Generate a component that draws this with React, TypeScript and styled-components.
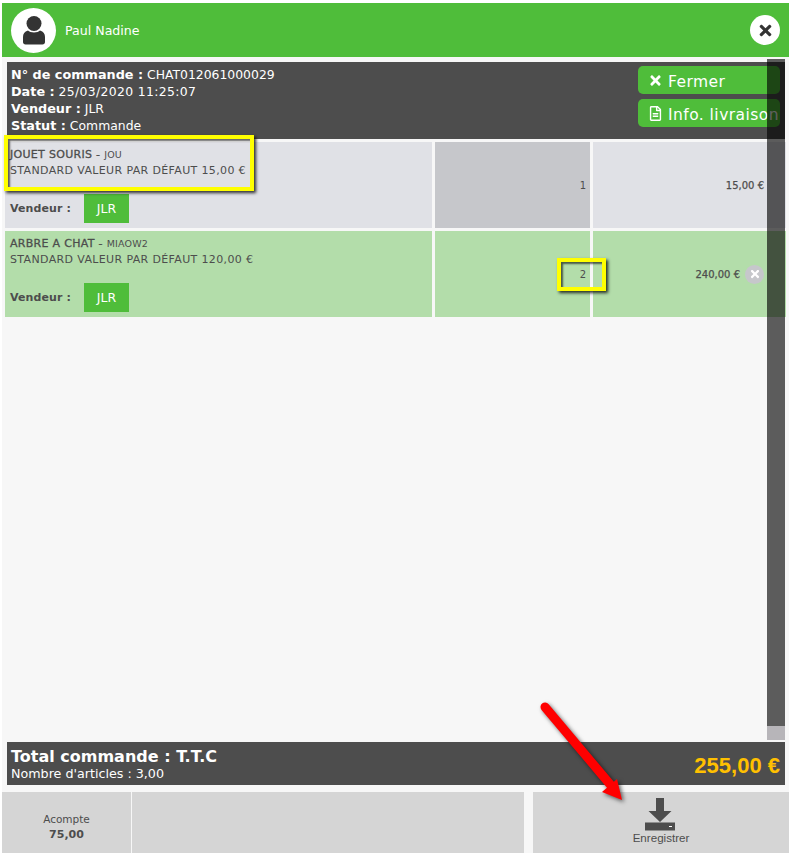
import React from 'react';
import styled, { createGlobalStyle } from 'styled-components';
import { FaTimes, FaRegFileAlt } from 'react-icons/fa';

const GlobalStyle = createGlobalStyle`
  html, body {
    margin: 0;
    padding: 0;
    background: #ffffff;
  }
  body {
    font-family: 'DejaVu Sans', Verdana, sans-serif;
    color: #4d4d4d;
  }
`;

const Page = styled.div`
  position: relative;
  width: 792px;
  height: 853px;
  padding: 3px 3px 0 2px;
  box-sizing: border-box;
  overflow: hidden;
  display: flex;
  flex-direction: column;
`;

const Header = styled.header`
  height: 54px;
  flex: none;
  background: #4fbd3a;
  display: flex;
  align-items: center;
  padding: 0 9px;
  color: #ffffff;
`;

const Avatar = styled.div`
  width: 45px;
  height: 45px;
  border-radius: 50%;
  background: #ffffff;
  display: flex;
  align-items: center;
  justify-content: center;
  margin-right: 9px;
`;

const CustomerName = styled.span`
  font-size: 12.6px;
  flex: 1;
`;

const CloseRound = styled.button`
  width: 30px;
  height: 30px;
  padding: 0;
  border: none;
  border-radius: 50%;
  background: #ffffff;
  color: #333333;
  font-size: 17px;
  display: flex;
  align-items: center;
  justify-content: center;
`;

const Body = styled.main`
  flex: 1;
  background: #f7f7f7;
  display: flex;
  flex-direction: column;
  padding: 5px 3px 0 3px;
  min-height: 0;
`;

const OrderInfo = styled.section`
  height: 77px;
  flex: none;
  margin: 0 1px 0 2px;
  background: #4d4d4d;
  color: #ffffff;
  display: flex;
  justify-content: space-between;
  padding: 4px 5px 0 4px;
  box-sizing: border-box;
`;

const InfoLines = styled.div`
  font-size: 12.4px;
  line-height: 17px;
  b {
    font-size: 12.8px;
  }
`;

const DateValue = styled.span`
  letter-spacing: 0.35px;
`;

const ActionStack = styled.div`
  display: flex;
  flex-direction: column;
  gap: 5px;
`;

const ActionButton = styled.button`
  width: 142px;
  height: 28px;
  padding: 3px 0 0 10px;
  border: none;
  border-radius: 5px;
  background: #4fbd3a;
  color: #ffffff;
  font-family: 'DejaVu Sans', Verdana, sans-serif;
  font-size: 15.5px;
  letter-spacing: 0.45px;
  display: flex;
  align-items: center;
  gap: 5px;
  white-space: nowrap;
  overflow: hidden;
  svg {
    flex: none;
    font-size: 15px;
    margin-top: -3px;
  }
`;

const Lines = styled.div`
  flex: 1;
  display: flex;
  flex-direction: column;
  gap: 3px;
  padding-top: 3px;
`;

const LineRow = styled.div<{ $selected?: boolean }>`
  display: grid;
  grid-template-columns: 427px 155px 193px;
  gap: 3px;
  height: 86px;
  --row-bg: ${(p) => (p.$selected ? '#b3ddaa' : '#e0e1e6')};
`;

const ProductCell = styled.div`
  background: var(--row-bg);
  padding: 5px 5px 5px;
  box-sizing: border-box;
  display: flex;
  flex-direction: column;
  font-size: 11px;
  line-height: 16px;
`;

const ProductName = styled.div`
  font-size: 11px;
  letter-spacing: 0.3px;
  -webkit-text-stroke: 0.3px #4d4d4d;
  small {
    font-size: 9.5px;
    letter-spacing: 0.2px;
    -webkit-text-stroke: 0;
  }
`;

const ProductVariant = styled.div`
  letter-spacing: 0.36px;
`;

const SellerRow = styled.div`
  margin-top: auto;
  display: flex;
  align-items: center;
`;

const SellerLabel = styled.b`
  width: 74px;
  font-size: 11px;
  letter-spacing: 0.1px;
`;

const SellerButton = styled.button`
  width: 45px;
  height: 29px;
  padding: 0;
  border: none;
  background: #4fbd3a;
  color: #ffffff;
  font-family: inherit;
  font-size: 12.5px;
`;

const QtyCell = styled.div<{ $active?: boolean }>`
  background: ${(p) => (p.$active ? '#c6c7cb' : 'var(--row-bg)')};
  display: flex;
  align-items: center;
  justify-content: flex-end;
  padding-right: 4px;
  font-size: 10px;
`;

const PriceCell = styled.div`
  background: var(--row-bg);
  display: flex;
  align-items: center;
  justify-content: flex-end;
  gap: 5px;
  padding-right: 22px;
  font-size: 10px;
  -webkit-text-stroke: 0.25px #4d4d4d;
`;

const RemoveLine = styled.span`
  width: 19px;
  height: 19px;
  border-radius: 50%;
  background: #c6c7cb;
  color: #ffffff;
  display: flex;
  align-items: center;
  justify-content: center;
  font-size: 12px;
`;

const TotalBar = styled.section`
  height: 43px;
  flex: none;
  margin: 0 1px 0 2px;
  background: #4d4d4d;
  color: #ffffff;
  display: flex;
  align-items: center;
  justify-content: space-between;
  padding: 0 5px 0 4px;
`;

const TotalTitle = styled.div`
  font-size: 16px;
  font-weight: 700;
  line-height: 19px;
  margin-top: -2px;
`;

const TotalCount = styled.div`
  font-size: 12.7px;
  line-height: 15px;
  margin-bottom: -2px;
`;

const TotalAmount = styled.div`
  font-family: 'Liberation Sans', Arial, sans-serif;
  font-size: 22px;
  font-weight: 700;
  color: #ffc000;
  padding-top: 5px;
`;

const Footer = styled.footer`
  height: 61px;
  flex: none;
  margin: 7px -3px 0;
  display: flex;
`;

const DepositTile = styled.div`
  width: 129px;
  background: #d5d5d5;
  display: flex;
  flex-direction: column;
  align-items: center;
  justify-content: center;
  font-size: 10.5px;
  line-height: 15px;
  padding-top: 9px;
  box-sizing: border-box;
  b {
    font-size: 11px;
  }
`;

const EmptyTile = styled.div`
  width: 392px;
  margin-left: 1px;
  background: #d5d5d5;
`;

const SaveTile = styled.button`
  width: 256px;
  margin-left: 9px;
  padding: 6px 0 0;
  border: none;
  background: #d5d5d5;
  color: #4d4d4d;
  font-family: 'Liberation Sans', Arial, sans-serif;
  font-size: 11.6px;
  line-height: 13px;
  display: flex;
  flex-direction: column;
  align-items: center;
  gap: 0;
  svg {
    margin-left: -2px;
  }
`;

const ScrollTrack = styled.div`
  position: absolute;
  left: 767px;
  top: 726px;
  width: 18px;
  height: 14px;
  background: #b7b5b9;
`;

const ScrollThumb = styled.div`
  position: absolute;
  left: 767px;
  top: 59px;
  width: 18px;
  height: 667px;
  background: rgba(0, 0, 0, 0.626);
`;

// yellow annotation frames drawn over the screenshot
const Callout = styled.div<{ $x: number; $y: number; $w: number; $h: number }>`
  position: absolute;
  left: ${(p) => p.$x}px;
  top: ${(p) => p.$y}px;
  width: ${(p) => p.$w}px;
  height: ${(p) => p.$h}px;
  box-sizing: border-box;
  border: 4px solid #ffff00;
  box-shadow: 2px 2px 3px rgba(0, 0, 0, 0.8), inset 2px 2px 2px rgba(0, 0, 0, 0.6);
`;

const ArrowLayer = styled.svg`
  position: absolute;
  left: 530px;
  top: 695px;
  overflow: visible;
  filter: drop-shadow(2px 2px 2px rgba(0, 0, 0, 0.6));
`;

const AvatarIcon = () => (
  <svg width="24" height="29" viewBox="0 0 24 29">
    <ellipse cx="12" cy="7.5" rx="7.5" ry="7.5" fill="#333333" />
    <path d="M6 14.5 C8 17 16 17 18 14.5 C21.5 15.5 23 18 23 21 V26 C23 27.5 22 28.5 20.5 28.5 H3.5 C2 28.5 1 27.5 1 26 V21 C1 18 2.5 15.5 6 14.5 Z" fill="#333333" />
  </svg>
);

const SaveIcon = () => (
  <svg width="30" height="33" viewBox="0 0 30 33">
    <path d="M11 0 H19 V13 H26.5 L15 24 L3.5 13 H11 Z" fill="#4d4d4d" />
    <rect x="0" y="24.5" width="30" height="8" fill="#4d4d4d" />
    <rect x="24" y="28" width="3" height="1" fill="#ffffff" />
  </svg>
);

const lines = [
  {
    name: 'JOUET SOURIS',
    code: 'JOU',
    variant: 'STANDARD VALEUR PAR DÉFAUT 15,00 €',
    qty: 1,
    price: '15,00 €',
    selected: false,
  },
  {
    name: 'ARBRE A CHAT',
    code: 'MIAOW2',
    variant: 'STANDARD VALEUR PAR DÉFAUT 120,00 €',
    qty: 2,
    price: '240,00 €',
    selected: true,
  },
];

const App: React.FC = () => {
  return (
    <Page>
      <GlobalStyle />
      <Header>
        <Avatar>
          <AvatarIcon />
        </Avatar>
        <CustomerName>Paul Nadine</CustomerName>
        <CloseRound>
          <FaTimes />
        </CloseRound>
      </Header>

      <Body>
        <OrderInfo>
          <InfoLines>
            <div><b>N° de commande :</b> CHAT012061000029</div>
            <div><b>Date :</b> <DateValue>25/03/2020 11:25:07</DateValue></div>
            <div><b>Vendeur :</b> JLR</div>
            <div><b>Statut :</b> Commande</div>
          </InfoLines>
          <ActionStack>
            <ActionButton><FaTimes /> Fermer</ActionButton>
            <ActionButton><FaRegFileAlt /> Info. livraison</ActionButton>
          </ActionStack>
        </OrderInfo>

        <Lines>
          {lines.map((line) => (
            <LineRow key={line.code} $selected={line.selected}>
              <ProductCell>
                <ProductName>
                  {line.name} - <small>{line.code}</small>
                </ProductName>
                <ProductVariant>{line.variant}</ProductVariant>
                <SellerRow>
                  <SellerLabel>Vendeur :</SellerLabel>
                  <SellerButton>JLR</SellerButton>
                </SellerRow>
              </ProductCell>
              <QtyCell $active={!line.selected}>{line.qty}</QtyCell>
              <PriceCell>
                {line.price}
                {line.selected && (
                  <RemoveLine>
                    <FaTimes />
                  </RemoveLine>
                )}
              </PriceCell>
            </LineRow>
          ))}
        </Lines>

        <TotalBar>
          <div>
            <TotalTitle>Total commande : T.T.C</TotalTitle>
            <TotalCount>Nombre d'articles : 3,00</TotalCount>
          </div>
          <TotalAmount>255,00 €</TotalAmount>
        </TotalBar>

        <Footer>
          <DepositTile>
            Acompte
            <b>75,00</b>
          </DepositTile>
          <EmptyTile />
          <SaveTile>
            <SaveIcon />
            Enregistrer
          </SaveTile>
        </Footer>
      </Body>

      <ScrollTrack />
      <ScrollThumb />
      <Callout $x={4} $y={135} $w={250} $h={56} />
      <Callout $x={557} $y={258} $w={49} $h={33} />
      <ArrowLayer width="100" height="110" viewBox="0 0 100 110">
        <path d="M15 12 L84 94" stroke="#ff0000" strokeWidth="9" strokeLinecap="round" fill="none" />
        <path d="M92 105 L72 97 L87 84 Z" fill="#ff0000" />
      </ArrowLayer>
    </Page>
  );
};

export default App;
